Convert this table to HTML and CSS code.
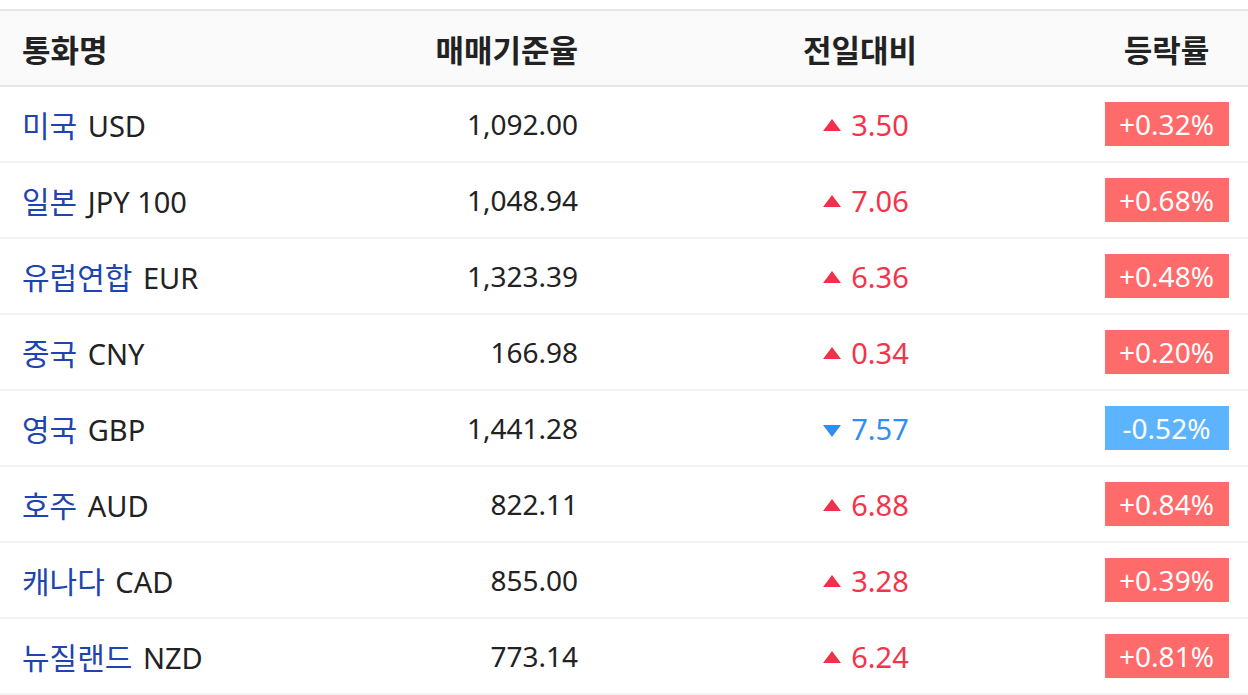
FILE: index.html
```html
<!DOCTYPE html>
<html lang="ko">
<head>
<meta charset="utf-8">
<link rel="stylesheet" href="styles.css">
</head>
<body>
<table class="fx">
  <colgroup>
    <col class="c1"><col class="c2"><col class="c3"><col class="c4">
  </colgroup>
  <thead>
    <tr><th class="name">통화명</th><th class="rate">매매기준율</th><th class="chg">전일대비</th><th class="pct">등락률</th></tr>
  </thead>
  <tbody>
    <tr><td class="name"><span class="kr">미국</span> USD</td><td class="rate">1,092.00</td><td class="chg up"><span class="tri"></span>3.50</td><td class="pct"><span class="badge up">+0.32%</span></td></tr>
    <tr><td class="name"><span class="kr">일본</span> JPY 100</td><td class="rate">1,048.94</td><td class="chg up"><span class="tri"></span>7.06</td><td class="pct"><span class="badge up">+0.68%</span></td></tr>
    <tr><td class="name"><span class="kr">유럽연합</span> EUR</td><td class="rate">1,323.39</td><td class="chg up"><span class="tri"></span>6.36</td><td class="pct"><span class="badge up">+0.48%</span></td></tr>
    <tr><td class="name"><span class="kr">중국</span> CNY</td><td class="rate">166.98</td><td class="chg up"><span class="tri"></span>0.34</td><td class="pct"><span class="badge up">+0.20%</span></td></tr>
    <tr><td class="name"><span class="kr">영국</span> GBP</td><td class="rate">1,441.28</td><td class="chg down"><span class="tri"></span>7.57</td><td class="pct"><span class="badge down">-0.52%</span></td></tr>
    <tr><td class="name"><span class="kr">호주</span> AUD</td><td class="rate">822.11</td><td class="chg up"><span class="tri"></span>6.88</td><td class="pct"><span class="badge up">+0.84%</span></td></tr>
    <tr><td class="name"><span class="kr">캐나다</span> CAD</td><td class="rate">855.00</td><td class="chg up"><span class="tri"></span>3.28</td><td class="pct"><span class="badge up">+0.39%</span></td></tr>
    <tr><td class="name"><span class="kr">뉴질랜드</span> NZD</td><td class="rate">773.14</td><td class="chg up"><span class="tri"></span>6.24</td><td class="pct"><span class="badge up">+0.81%</span></td></tr>
  </tbody>
</table>
</body>
</html>
```
FILE: styles.css
```css
html, body {
  margin: 0;
  padding: 0;
  background: #fff;
}
body {
  padding-top: 9px;
  font-family: "Noto Sans", "Noto Sans CJK KR", sans-serif;
  color: #222;
}
.fx {
  width: 1248px;
  border-collapse: collapse;
  table-layout: fixed;
  font-size: 28px;
}
.c1 { width: 300px; }
.c2 { width: 300px; }
.c3 { width: 504px; }
.c4 { width: 144px; }

thead th {
  background: #fafafa;
  border-top: 2px solid #e6e6e6;
  border-bottom: 2px solid #e6e6e6;
  height: 74px;
  padding: 0;
  font-size: 31px;
  font-weight: 700;
  color: #222;
  font-family: "Noto Sans CJK KR", "Noto Sans", sans-serif;
}
tbody td {
  height: 74px;
  padding: 0;
  border-bottom: 2px solid #f3f3f3;
  white-space: nowrap;
}
.name {
  text-align: left;
  padding-left: 22px;
}
td.name { font-size: 29px; }
.rate {
  text-align: right;
  padding-right: 22px;
}
.chg {
  text-align: center;
  padding-left: 16px;
}
td.chg {
  padding-left: 28px;
  font-size: 29px;
}
.pct {
  text-align: center;
  padding-right: 19px;
}
.kr {
  color: #1d44b0;
  font-size: 30px;
  margin-right: 3px;
  font-family: "Noto Sans CJK KR", sans-serif;
}
.up { color: #f5334a; }
.down { color: #2f8ef0; }
.tri {
  display: inline-block;
  width: 0;
  height: 0;
  margin-right: 10px;
  vertical-align: 5px;
  border-left: 9.5px solid transparent;
  border-right: 9.5px solid transparent;
}
.up .tri { border-bottom: 12px solid #f3304b; }
.down .tri { border-top: 12px solid #2f8ef0; vertical-align: 3px; }
.badge {
  display: inline-block;
  width: 124px;
  height: 44px;
  line-height: 44px;
  color: #fff;
  text-align: center;
}
.badge.up { background: #ff6a6a; color: #fff; }
.badge.down { background: #5cb4ff; color: #fff; }
```
